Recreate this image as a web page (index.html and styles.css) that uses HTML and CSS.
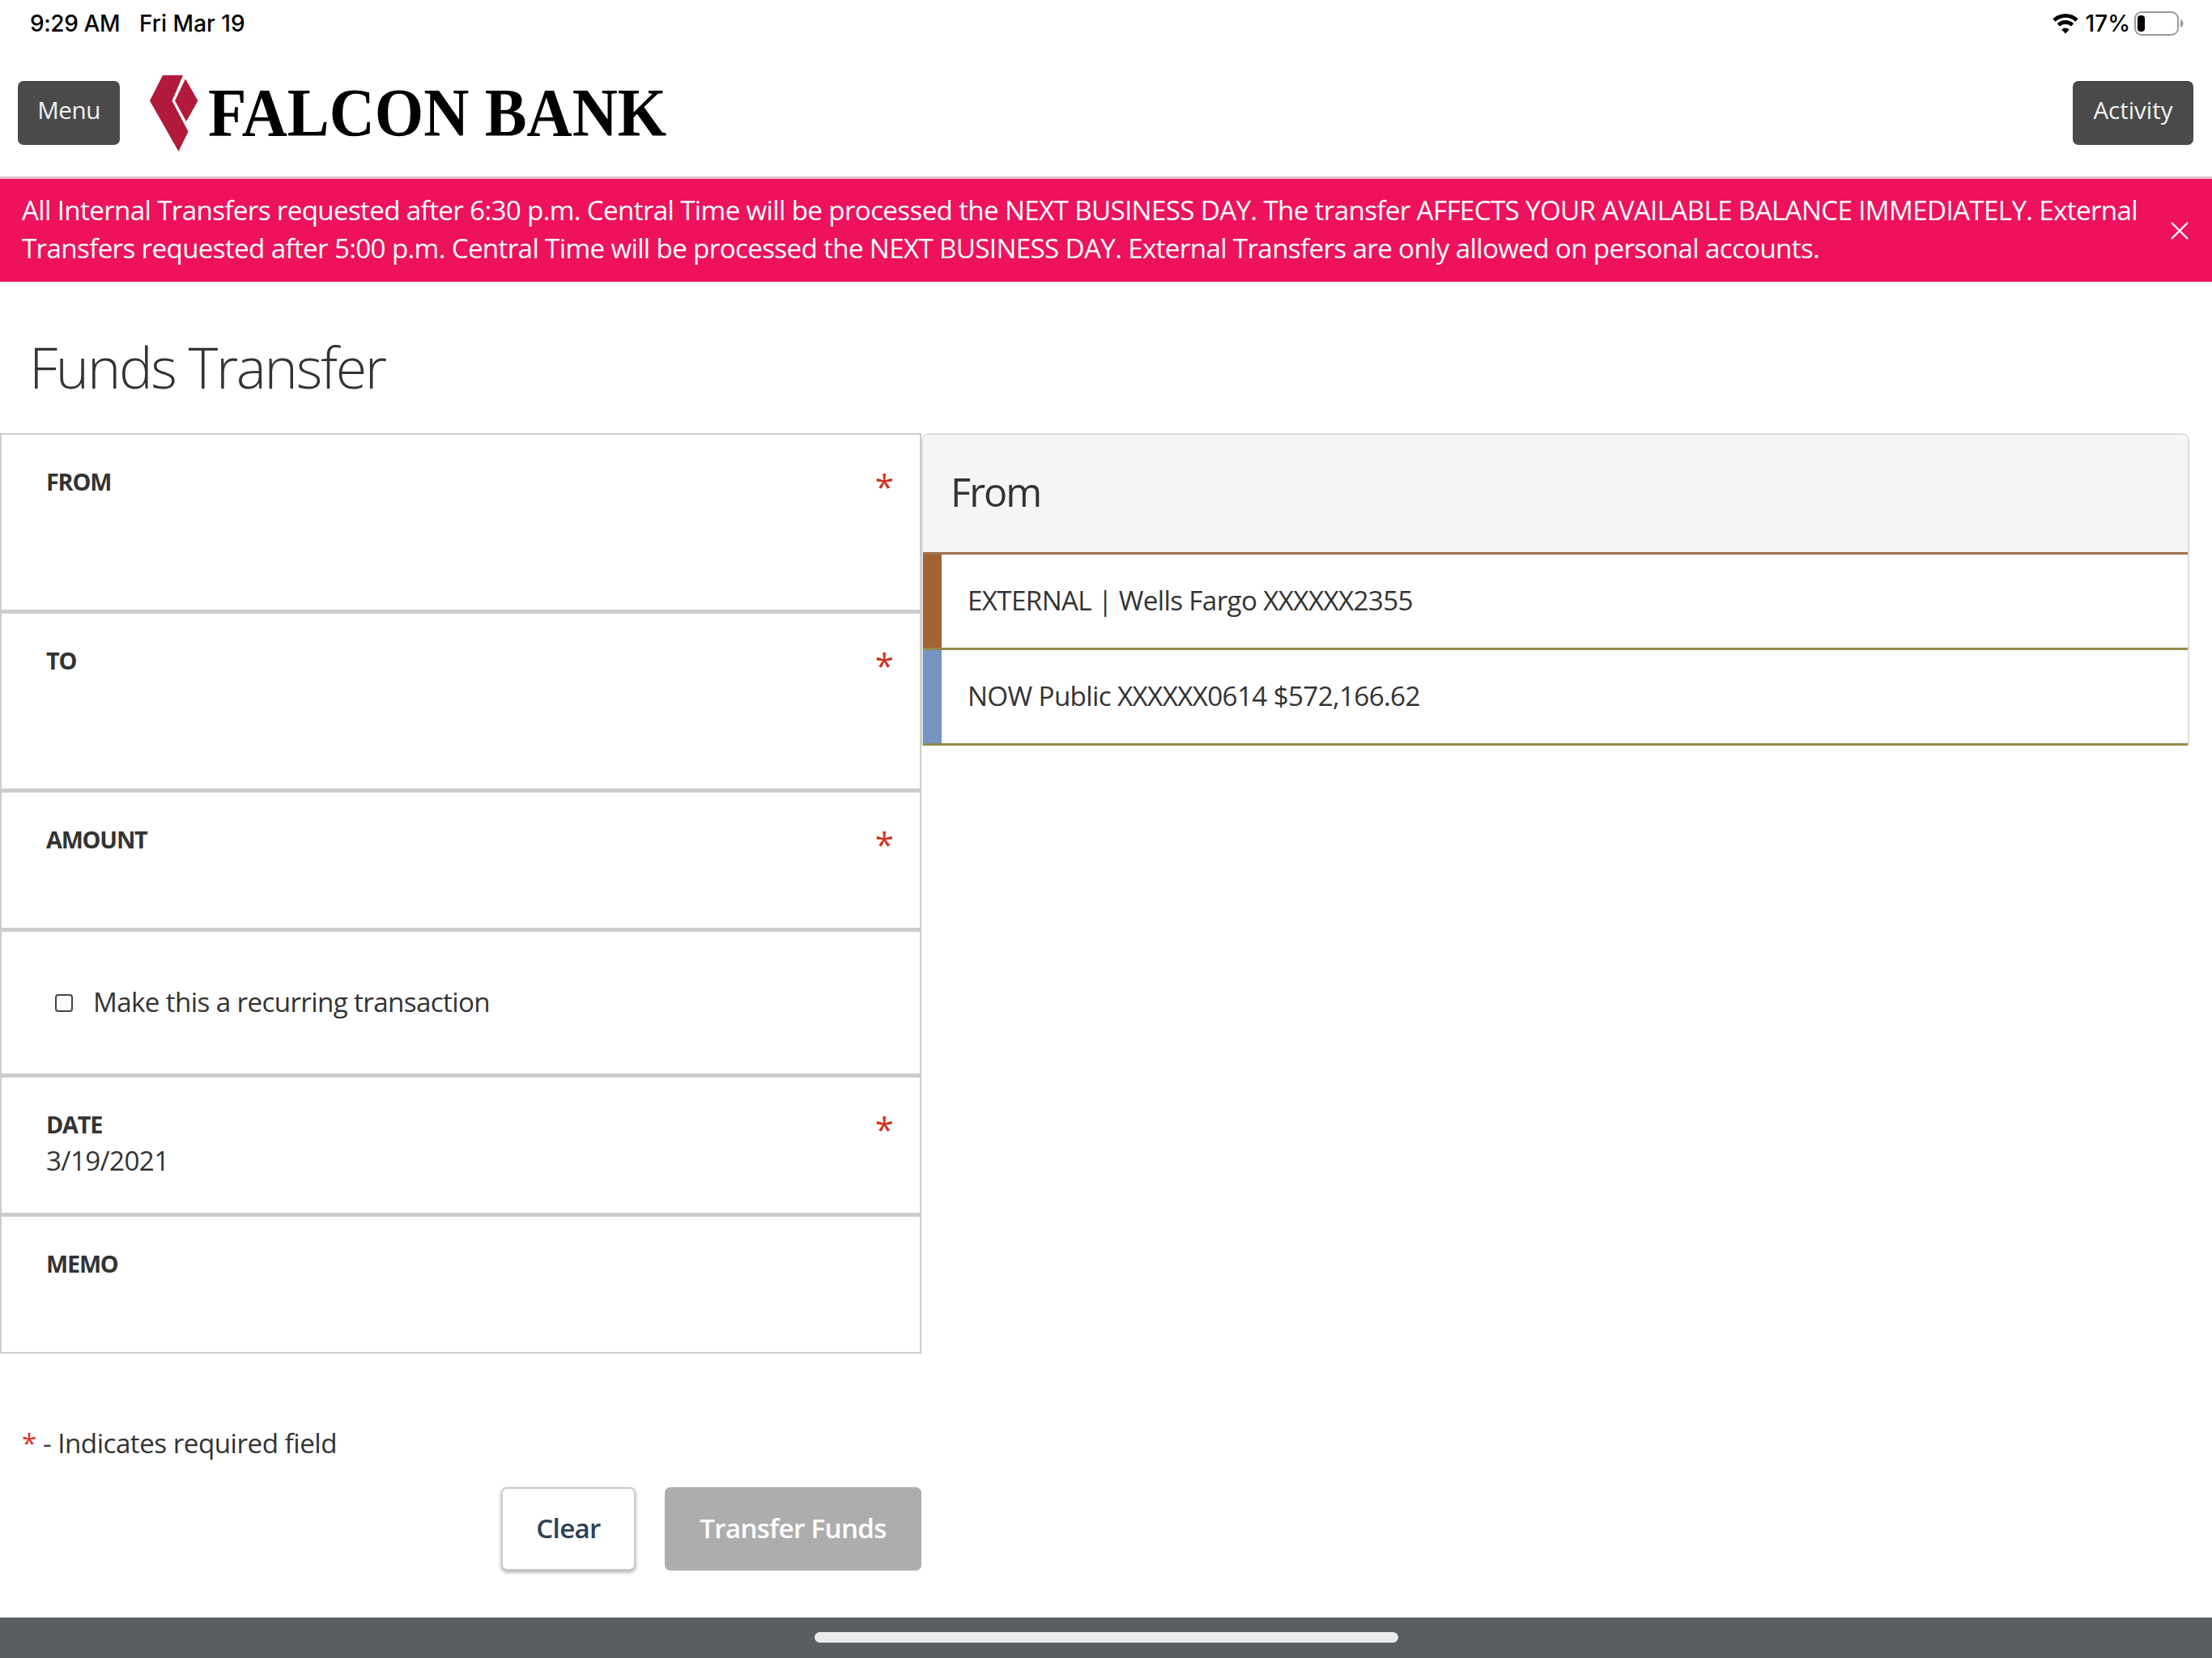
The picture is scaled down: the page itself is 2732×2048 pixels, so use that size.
FILE: index.html
```
<!DOCTYPE html>
<html lang="en">
<head>
    <meta charset="UTF-8">
    <meta name="viewport" content="width=device-width, initial-scale=1.0">
    <title>Funds Transfer - Falcon Bank</title>
    <link rel="stylesheet" href="styles.css">
</head>
<body>
    <div class="status-bar">
        <span class="status-time">9:29 AM</span>
        <span class="status-date">Fri Mar 19</span>
        <div class="status-right">
            <svg class="wifi" viewBox="0 0 32 26" width="32" height="26">
                <path d="M2 9 A20 20 0 0 1 30 9" fill="none" stroke="#000" stroke-width="4.8"/>
                <path d="M7.4 14.8 A12.4 12.4 0 0 1 24.6 14.8" fill="none" stroke="#000" stroke-width="4.6"/>
                <path d="M16 25.5 L11.3 20.4 A6.6 6.6 0 0 1 20.7 20.4 Z" fill="#000"/>
            </svg>
            <span>17%</span>
            <svg class="battery" viewBox="0 0 62 30" width="62" height="30">
                <rect x="1" y="1" width="53" height="28" rx="8" fill="none" stroke="#999" stroke-width="2"/>
                <rect x="4" y="5" width="9" height="20" rx="4" fill="#000"/>
                <path d="M57 10 Q60.5 11.5 60.5 15 Q60.5 18.5 57 20 Z" fill="#999"/>
            </svg>
        </div>
    </div>

    <header class="header">
        <button class="nav-button">Menu</button>
        <div class="logo">
            <svg viewBox="0 0 60 100" width="60" height="100">
                <polygon points="16,3 41,3 27.5,34.5 47.5,72.5 35.5,97 0,34.5" fill="#b11a3b"/>
                <polygon points="44,7.5 59.5,34.5 45,60 31,34.5" fill="#b11a3b"/>
            </svg>
            <span class="logo-text">FALCON BANK</span>
        </div>
        <button class="nav-button activity">Activity</button>
    </header>

    <div class="alert">
        <p class="alert-text">All Internal Transfers requested after 6:30 p.m. Central Time will be processed the NEXT BUSINESS DAY. The transfer AFFECTS YOUR AVAILABLE BALANCE IMMEDIATELY. External Transfers requested after 5:00 p.m. Central Time will be processed the NEXT BUSINESS DAY. External Transfers are only allowed on personal accounts.</p>
        <svg class="alert-close" viewBox="0 0 24 24" width="24" height="24">
            <path d="M2 2 L22 22 M22 2 L2 22" fill="none" stroke="#fff" stroke-width="2.4"/>
        </svg>
    </div>

    <h1 class="title">Funds Transfer</h1>

    <main class="content">
        <form class="transfer-form">
            <div class="fields">
                <div class="field tall">
                    <div class="label">FROM</div>
                    <span class="required">*</span>
                </div>
                <div class="field tall">
                    <div class="label">TO</div>
                    <span class="required">*</span>
                </div>
                <div class="field">
                    <div class="label">AMOUNT</div>
                    <span class="required">*</span>
                </div>
                <div class="field recurring">
                    <span class="checkbox"></span>
                    <span>Make this a recurring transaction</span>
                </div>
                <div class="field">
                    <div>
                        <div class="label">DATE</div>
                        <div class="value">3/19/2021</div>
                    </div>
                    <span class="required">*</span>
                </div>
                <div class="field last">
                    <div class="label">MEMO</div>
                </div>
            </div>
            <p class="note"><span class="note-star">*</span> - Indicates required field</p>
            <div class="actions">
                <button type="button" class="button clear">Clear</button>
                <button type="button" class="button submit" disabled>Transfer Funds</button>
            </div>
        </form>

        <section class="accounts">
            <h2 class="accounts-title">From</h2>
            <div class="account external">EXTERNAL | Wells Fargo XXXXXX2355</div>
            <div class="account now">NOW Public XXXXXX0614 $572,166.62</div>
        </section>
    </main>

    <footer class="footer">
        <div class="home-bar"></div>
    </footer>
</body>
</html>
```
FILE: styles.css
```
* {
    box-sizing: border-box;
}

body {
    margin: 0;
    height: 2048px;
    display: flex;
    flex-direction: column;
    background-color: #fff;
    color: #333;
    font-family: "Open Sans", sans-serif;
    font-size: 33.2px;
    line-height: 46.5px;
    letter-spacing: -0.019em;
    overflow: hidden;
}

button {
    font-family: inherit;
    border: none;
    padding: 0;
}

.status-bar {
    display: flex;
    align-items: center;
    height: 58px;
    padding: 0 34px 0 37px;
    color: #000;
    font-family: Inter, sans-serif;
    font-size: 28px;
    font-weight: 500;
    letter-spacing: 0;
}

.status-time {
    letter-spacing: -0.4px;
}

.status-date {
    margin-left: 24px;
}

.status-right {
    display: flex;
    align-items: center;
    margin-left: auto;
}

.wifi {
    margin-right: 9px;
}

.battery {
    margin-left: 5px;
}

.header {
    display: flex;
    align-items: flex-start;
    height: 160px;
    padding: 42px 23px 0 22px;
}

.nav-button {
    width: 126px;
    height: 79px;
    padding-bottom: 8px;
    border-radius: 7px;
    background-color: #4a4a4a;
    color: #f2f2f2;
    font-size: 29.5px;
    font-weight: 500;
    letter-spacing: -0.4px;
}

.activity {
    width: 149px;
    margin-left: auto;
    letter-spacing: 0;
}

.logo {
    display: flex;
    gap: 12px;
    margin: -10px 0 0 37px;
}

.logo-text {
    font-family: "Liberation Serif", serif;
    font-size: 84px;
    font-weight: 700;
    line-height: 100px;
    letter-spacing: 0;
    color: #000;
    transform: scaleX(0.925);
    transform-origin: left;
}

.alert {
    display: flex;
    align-items: flex-start;
    height: 130px;
    padding: 16px 28px 0 27px;
    border-top: 3px solid #e3bcc9;
    background-color: #ed125b;
    color: #fff;
}

.alert-text {
    width: 2625px;
    margin: 0;
    letter-spacing: -0.02em;
}

.alert-close {
    margin: 36px 0 0 auto;
}

.title {
    margin: 0;
    height: 187px;
    padding: 55px 0 0 36px;
    font-size: 70px;
    font-weight: 300;
    line-height: 100px;
    letter-spacing: -2.3px;
}

.content {
    display: flex;
    align-items: flex-start;
    flex: 1;
}

.transfer-form {
    width: 1138px;
}

.fields {
    border: 2px solid #ccc;
}

.field {
    display: flex;
    justify-content: space-between;
    height: 172px;
    padding: 38px 32px 0 55px;
    border-bottom: 5px solid #ccc;
}

.tall {
    height: 221px;
}

.recurring {
    align-items: center;
    justify-content: flex-start;
    height: 180px;
    padding: 0 0 0 66px;
}

.last {
    height: 167px;
    border-bottom: none;
}

.label {
    font-size: 28.8px;
    font-weight: 700;
    line-height: 40px;
    letter-spacing: -1.2px;
}

.value {
    margin-top: 2px;
}

.required {
    color: #d0311e;
    font-size: 42px;
    line-height: 40px;
    padding-top: 6px;
    letter-spacing: 0;
}

.checkbox {
    width: 22px;
    height: 22px;
    margin-right: 25px;
    border: 2px solid #444;
    border-radius: 4px;
}

.note {
    margin: 88px 0 0 27px;
    letter-spacing: -0.5px;
}

.note-star {
    color: #e03020;
}

.actions {
    display: flex;
    justify-content: flex-end;
    gap: 36px;
    margin-top: 30px;
}

.button {
    height: 103px;
    padding-bottom: 1px;
    border-radius: 7px;
    font-size: 33.2px;
    font-weight: 600;
    letter-spacing: -0.7px;
}

.clear {
    width: 166px;
    border: 2px solid #ccc;
    background-color: #fff;
    color: #2e4057;
    box-shadow: 0 2px 4px rgba(0, 0, 0, 0.35);
}

.submit {
    width: 317px;
    background-color: #adadad;
    color: #fff;
}

.accounts {
    width: 1566px;
    border: 2px solid #ddd;
    border-bottom: none;
    border-radius: 9px 9px 0 0;
}

.accounts-title {
    margin: 0;
    height: 145px;
    padding: 35px 0 0 34px;
    background-color: #f5f5f5;
    border-radius: 7px 7px 0 0;
    font-size: 48.5px;
    font-weight: 400;
    line-height: 70px;
    letter-spacing: -1.9px;
}

/* coloured strip on the left marks the account type */
.account {
    display: flex;
    align-items: center;
    height: 118px;
    padding-left: 55px;
    background-color: #fff;
    background-repeat: no-repeat;
    background-size: 23px 100%;
    border-bottom: 3px solid #94894a;
}

.external {
    height: 121px;
    border-top: 3px solid #a0714c;
    background-image: linear-gradient(#a26432, #a26432);
}

.now {
    background-image: linear-gradient(#7495c2, #7495c2);
}

.footer {
    height: 50px;
    padding-top: 18px;
    background-color: #5a5d62;
}

.home-bar {
    width: 721px;
    height: 13px;
    margin: 0 auto;
    border-radius: 7px;
    background-color: #ebebeb;
}
```
